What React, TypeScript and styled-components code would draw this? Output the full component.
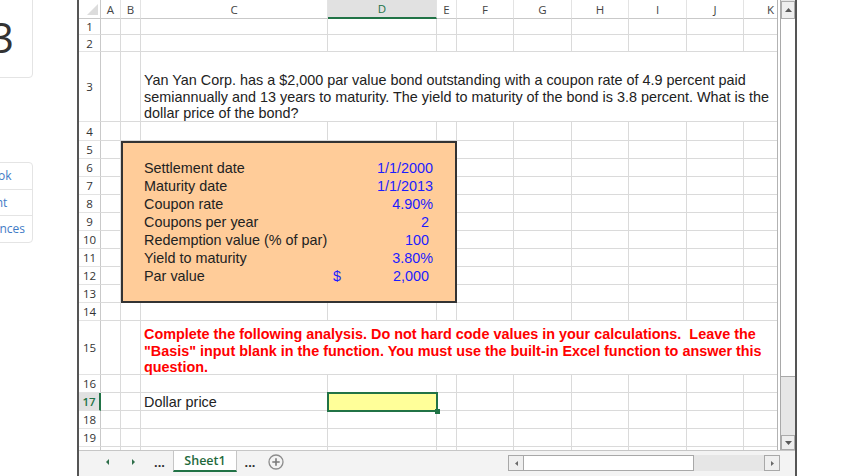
import React from 'react';
import styled, { createGlobalStyle } from 'styled-components';

const GlobalStyle = createGlobalStyle`
  html, body {
    margin: 0;
    padding: 0;
    background: #fff;
  }
  body {
    width: 848px;
    height: 476px;
    overflow: hidden;
  }
`;

const GREEN = '#217346';
const GRID = '#dadada';
const HEAD_LINE = '#c9c9c9';
const INPUT_BLUE = '#1c1cff';

// column widths in px, A..K (K is cut by the scrollbar)
const colNames = ['A', 'B', 'C', 'D', 'E', 'F', 'G', 'H', 'I', 'J', 'K'];
const colWidths = [20, 20, 187, 109, 20, 57, 58, 57, 58, 57, 34];
// row heights, rows 1..20
const rowHeights = [16, 17, 70, 19, 18, 18, 18, 18, 18, 18, 18, 18, 18, 18, 54, 18, 18, 18, 18, 18];
const mergedRows = [3, 15];

type Pos = { $r: number; $c: number; $cs?: number; $rs?: number };

const place = ({ $r, $c, $cs = 1, $rs = 1 }: Pos) =>
  `grid-row: ${$r} / span ${$rs}; grid-column: ${$c} / span ${$cs};`;

const Page = styled.div`
  display: flex;
  width: 848px;
  height: 476px;
  overflow: hidden;
  background: #fff;
`;

const Sidebar = styled.div`
  flex: none;
  width: 77px;
  display: flex;
  flex-direction: column;
  overflow: hidden;
`;

const NumberCard = styled.div`
  box-sizing: border-box;
  flex: none;
  width: 78px;
  height: 88px;
  margin: -10px 0 0 -45px;
  padding: 5px 0 0 16px;
  border: 1px solid #e4e4e4;
  border-radius: 4px;
  display: flex;
  align-items: center;
  justify-content: center;
  font-family: 'Open Sans', sans-serif;
  font-size: 42px;
  color: #333;
`;

const LinkCard = styled.div`
  box-sizing: border-box;
  flex: none;
  width: 78px;
  margin: 84px 0 0 -45px;
  border: 1px solid #e4e4e4;
  border-radius: 4px;
`;

const LinkItem = styled.div`
  height: 25.5px;
  display: flex;
  align-items: center;
  justify-content: center;
  font-family: 'Open Sans', sans-serif;
  font-size: 12px;
  color: #3f7bc6;
  & + & {
    border-top: 1px solid #e4e4e4;
  }
`;

const Workbook = styled.div`
  flex: none;
  box-sizing: border-box;
  width: 720px;
  border-left: 2px solid #555;
  border-right: 2px solid #555;
  display: flex;
  flex-direction: column;
`;

const SheetArea = styled.div`
  display: flex;
  height: 450px;
`;

const Sheet = styled.div`
  flex: none;
  width: 698px;
  height: 450px;
  overflow: hidden;
  display: grid;
  align-content: start;
  grid-template-columns: 22px ${colWidths.map((w) => `${w}px`).join(' ')};
  grid-template-rows: 19px ${rowHeights.map((h) => `${h}px`).join(' ')};
  font-family: 'Liberation Sans', Arial, sans-serif;
  font-size: 14.4px;
  color: #222;
`;

const Corner = styled.div<Pos>`
  ${place}
  position: relative;
  box-sizing: border-box;
  border-right: 1px solid ${HEAD_LINE};
  border-bottom: 1px solid ${HEAD_LINE};
  &::after {
    content: '';
    position: absolute;
    right: 2px;
    bottom: 3px;
    border-left: 11px solid transparent;
    border-bottom: 11px solid #dcdcdc;
  }
`;

const ColHeader = styled.div<Pos & { $sel?: boolean; $end?: boolean }>`
  ${place}
  box-sizing: border-box;
  display: flex;
  align-items: center;
  justify-content: ${(p) => (p.$end ? 'flex-end' : 'center')};
  padding-right: ${(p) => (p.$end ? '3px' : '0')};
  background: ${(p) => (p.$sel ? '#e1e1e1' : '#fff')};
  border-right: 1px solid #e3e3e3;
  border-bottom: ${(p) => (p.$sel ? `2px solid ${GREEN}` : `1px solid ${HEAD_LINE}`)};
  font-family: 'Open Sans', sans-serif;
  font-size: 11.5px;
  color: ${(p) => (p.$sel ? GREEN : '#444')};
`;

const RowHeader = styled.div<Pos & { $sel?: boolean }>`
  ${place}
  box-sizing: border-box;
  display: flex;
  align-items: center;
  justify-content: center;
  background: ${(p) => (p.$sel ? '#e1e1e1' : '#fff')};
  border-right: ${(p) => (p.$sel ? `2px solid ${GREEN}` : `1px solid ${HEAD_LINE}`)};
  border-bottom: 1px solid #e3e3e3;
  font-family: 'Open Sans', sans-serif;
  font-size: 11.5px;
  font-weight: ${(p) => (p.$sel ? 600 : 400)};
  color: ${(p) => (p.$sel ? GREEN : '#333')};
`;

const Cell = styled.div<Pos>`
  ${place}
  box-sizing: border-box;
  border-right: 1px solid ${GRID};
  border-bottom: 1px solid ${GRID};
`;

const WrapCell = styled(Cell)<{ $alert?: boolean; $top: number }>`
  display: flex;
  flex-direction: column;
  justify-content: flex-start;
  padding: ${(p) => p.$top}px 0 0 3px;
  line-height: 16.6px;
  color: ${(p) => (p.$alert ? '#ff0000' : '#222')};
  font-weight: ${(p) => (p.$alert ? 700 : 400)};
`;

const Line = styled.span`
  display: block;
  white-space: pre;
`;

const InputBox = styled.div<Pos>`
  ${place}
  z-index: 1;
  box-sizing: border-box;
  border: 2px solid #333;
  background: #ffcc99;
`;

const Label = styled.div<Pos>`
  ${place}
  z-index: 2;
  display: flex;
  align-items: center;
  padding-left: 3px;
  white-space: nowrap;
`;

const Value = styled.div<Pos & { $pad?: number }>`
  ${place}
  z-index: 2;
  display: flex;
  align-items: center;
  justify-content: flex-end;
  padding: 0 ${(p) => p.$pad ?? 4}px 0 5px;
  color: ${INPUT_BLUE};
  white-space: nowrap;
`;

const Currency = styled.span`
  margin-right: auto;
`;

const Selection = styled.div<Pos>`
  ${place}
  z-index: 3;
  position: relative;
  margin: -1px;
  border: 2px solid ${GREEN};
  background: #ffff99;
  &::after {
    content: '';
    position: absolute;
    right: -4px;
    bottom: -4px;
    width: 5px;
    height: 5px;
    background: ${GREEN};
  }
`;

const VScrollWrap = styled.div`
  flex: none;
  box-sizing: border-box;
  width: 18px;
  border-left: 1px solid #b3b3b3;
  padding-left: 2px;
  display: flex;
  background: #fff;
`;

const VScroll = styled.div`
  flex: 1;
  display: flex;
  flex-direction: column;
  border-left: 1px solid #a9a9a9;
  background: #e6e6e6;
`;

const ScrollBtn = styled.div<{ $h: number; $top?: number }>`
  flex: none;
  box-sizing: border-box;
  height: ${(p) => p.$h}px;
  margin-top: ${(p) => p.$top ?? 0}px;
  border: 1px solid #ababab;
  background: #eeeeee;
  display: flex;
  align-items: center;
  justify-content: center;
`;

const VThumb = styled.div`
  flex: none;
  box-sizing: border-box;
  height: 358px;
  background: #fff;
  border-bottom: 1px solid #a9a9a9;
`;

const Track = styled.div`
  flex: 1;
`;

const TabBar = styled.div`
  box-sizing: border-box;
  height: 26px;
  border-top: 1px solid #c6c6c6;
  background: #f3f3f3;
  display: flex;
  align-items: flex-start;
  padding-left: 15px;
`;

const NavBtn = styled.div<{ $w?: number }>`
  flex: none;
  width: ${(p) => p.$w ?? 26}px;
  height: 21px;
  display: flex;
  align-items: center;
  justify-content: center;
`;

const Dots = styled.div<{ $w?: number }>`
  flex: none;
  box-sizing: border-box;
  width: ${(p) => p.$w ?? 26}px;
  height: 21px;
  display: flex;
  align-items: flex-end;
  justify-content: center;
  padding-bottom: 3px;
  font-family: 'Liberation Sans', Arial, sans-serif;
  font-size: 13px;
  font-weight: 700;
  line-height: 1;
  color: #333;
`;

const SheetTab = styled.div`
  flex: none;
  box-sizing: border-box;
  width: 64px;
  height: 21px;
  background: #fff;
  border-left: 1px solid #c6c6c6;
  border-right: 1px solid #c6c6c6;
  border-bottom: 2px solid ${GREEN};
  display: flex;
  align-items: center;
  justify-content: center;
  font-family: 'Open Sans', sans-serif;
  font-size: 12.5px;
  font-weight: 600;
  color: #1f6a3c;
`;

const Spacer = styled.div`
  flex: 1;
`;

const HScroll = styled.div`
  flex: none;
  display: flex;
  width: 272px;
  height: 16px;
  margin: 4px 15px 0 0;
  background: #e6e6e6;
`;

const HBtn = styled.div`
  flex: none;
  box-sizing: border-box;
  width: 16px;
  border: 1px solid #a8a8a8;
  background: #efefef;
  display: flex;
  align-items: center;
  justify-content: center;
`;

const HThumb = styled.div`
  flex: none;
  box-sizing: border-box;
  width: 170px;
  background: #fff;
  border: 1px solid #a8a8a8;
  border-left: none;
`;

type Dir = 'up' | 'down' | 'left' | 'right';

const Tri = ({ dir, w, h, color }: { dir: Dir; w: number; h: number; color: string }) => {
  const pts: Record<Dir, string> = {
    up: `0,${h} ${w / 2},0 ${w},${h}`,
    down: `0,0 ${w},0 ${w / 2},${h}`,
    left: `${w},0 ${w},${h} 0,${h / 2}`,
    right: `0,0 ${w},${h / 2} 0,${h}`,
  };
  return (
    <svg width={w} height={h} viewBox={`0 0 ${w} ${h}`}>
      <polygon points={pts[dir]} fill={color} />
    </svg>
  );
};

const PlusCircle = () => (
  <svg width="16" height="16" viewBox="0 0 16 16">
    <circle cx="8" cy="8" r="7" fill="none" stroke="#8c8c8c" strokeWidth="1.3" />
    <path d="M8 4.3V11.7M4.3 8H11.7" stroke="#7a7a7a" strokeWidth="1.6" />
  </svg>
);

const params: { label: string; value: string; pad?: number; currency?: boolean }[] = [
  { label: 'Settlement date', value: '1/1/2000' },
  { label: 'Maturity date', value: '1/1/2013' },
  { label: 'Coupon rate', value: '4.90%' },
  { label: 'Coupons per year', value: '2', pad: 8 },
  { label: 'Redemption value (% of par)', value: '100', pad: 8 },
  { label: 'Yield to maturity', value: '3.80%' },
  { label: 'Par value', value: '2,000', pad: 8, currency: true },
];

const question = [
  'Yan Yan Corp. has a $2,000 par value bond outstanding with a coupon rate of 4.9 percent paid',
  'semiannually and 13 years to maturity. The yield to maturity of the bond is 3.8 percent. What is the',
  'dollar price of the bond?',
];

const instructions = [
  'Complete the following analysis. Do not hard code values in your calculations.  Leave the',
  '"Basis" input blank in the function. You must use the built-in Excel function to answer this',
  'question.',
];

const SheetGrid = () => {
  const cells: React.ReactNode[] = [<Corner key="corner" $r={1} $c={1} />];

  colNames.forEach((name, i) => {
    cells.push(
      <ColHeader key={name} $r={1} $c={i + 2} $sel={name === 'D'} $end={name === 'K'}>
        {name}
      </ColHeader>
    );
  });

  rowHeights.forEach((_, i) => {
    const row = i + 1;
    cells.push(
      <RowHeader key={`h${row}`} $r={row + 1} $c={1} $sel={row === 17}>
        {row}
      </RowHeader>
    );
    colNames.forEach((name, ci) => {
      if (mergedRows.includes(row) && ci >= 2) return;
      cells.push(<Cell key={`${name}${row}`} $r={row + 1} $c={ci + 2} />);
    });
  });

  return (
    <Sheet>
      {cells}
      <WrapCell $r={4} $c={4} $cs={9} $top={20}>
        {question.map((l) => (
          <Line key={l}>{l}</Line>
        ))}
      </WrapCell>
      <WrapCell $r={16} $c={4} $cs={9} $top={5} $alert>
        {instructions.map((l) => (
          <Line key={l}>{l}</Line>
        ))}
      </WrapCell>

      <InputBox $r={6} $c={3} $cs={4} $rs={9} />
      {params.map((p, i) => (
        <React.Fragment key={p.label}>
          <Label $r={i + 7} $c={4}>
            {p.label}
          </Label>
          <Value $r={i + 7} $c={5} $pad={p.pad}>
            {p.currency && <Currency>$</Currency>}
            {p.value}
          </Value>
        </React.Fragment>
      ))}

      <Label $r={18} $c={4}>
        Dollar price
      </Label>
      <Selection $r={18} $c={5} />
    </Sheet>
  );
};

const App = () => (
  <>
    <GlobalStyle />
    <Page>
      <Sidebar>
        <NumberCard>3</NumberCard>
        <LinkCard>
          <LinkItem>eBook</LinkItem>
          <LinkItem>Print</LinkItem>
          <LinkItem>References</LinkItem>
        </LinkCard>
      </Sidebar>

      <Workbook>
        <SheetArea>
          <SheetGrid />
          <VScrollWrap>
            <VScroll>
              <ScrollBtn $h={18} $top={1}>
                <Tri dir="up" w={7} h={4} color="#5a5a5a" />
              </ScrollBtn>
              <VThumb />
              <Track />
              <ScrollBtn $h={15}>
                <Tri dir="down" w={7} h={4} color="#5a5a5a" />
              </ScrollBtn>
            </VScroll>
          </VScrollWrap>
        </SheetArea>

        <TabBar>
          <NavBtn>
            <Tri dir="left" w={3} h={6} color="#2f6e4a" />
          </NavBtn>
          <NavBtn>
            <Tri dir="right" w={3} h={6} color="#2f6e4a" />
          </NavBtn>
          <Dots $w={27}>...</Dots>
          <SheetTab>Sheet1</SheetTab>
          <Dots>...</Dots>
          <NavBtn>
            <PlusCircle />
          </NavBtn>
          <Spacer />
          <HScroll>
            <HBtn>
              <Tri dir="left" w={3} h={5} color="#6a6a6a" />
            </HBtn>
            <HThumb />
            <Track />
            <HBtn>
              <Tri dir="right" w={3} h={5} color="#6a6a6a" />
            </HBtn>
          </HScroll>
        </TabBar>
      </Workbook>
    </Page>
  </>
);

export default App;
